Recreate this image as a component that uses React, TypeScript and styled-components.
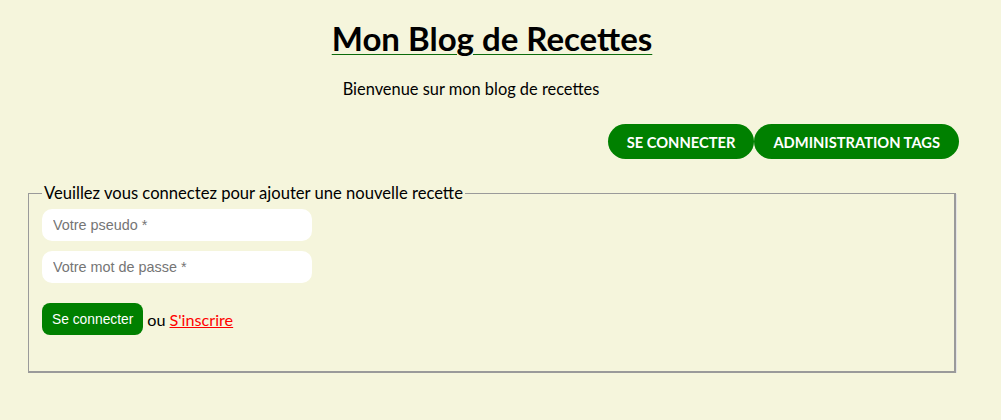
import React from "react";
import styled, { createGlobalStyle } from "styled-components";

const Global = createGlobalStyle`
  html, body { margin: 0; padding: 0; background: #f5f5dc; }
  body { font-family: "Lato", "DejaVu Sans", sans-serif; color: #000; }
`;

const Page = styled.div`
  margin: 0 45px 0 28px;
  padding-top: 19px;
  display: flex;
  flex-direction: column;
`;

const Title = styled.h1`
  margin: 0;
  text-align: center;
  font-size: 33px;
  font-weight: 700;
  line-height: 38px;
  text-decoration: underline;
  text-decoration-color: #0b6b0b;
  text-decoration-thickness: 1px;
  text-underline-offset: 3px;
`;

const Intro = styled.p`
  margin: 22px 42px 0 0;
  text-align: center;
  font-size: 16.4px;
  line-height: 20px;
`;

const Nav = styled.nav`
  display: flex;
  justify-content: flex-end;
  margin: 25px -3px 0 0;
`;

const NavButton = styled.button`
  height: 35px;
  padding: 0 19px;
  border: none;
  border-radius: 18px;
  background: #008000;
  color: #fff;
  font-family: inherit;
  font-weight: 700;
  font-size: 14.7px;
  text-transform: uppercase;
  cursor: pointer;
`;

const Fieldset = styled.fieldset`
  margin: 25px 0 0 0;
  padding: 7px 12px 36px 13px;
  border: 1px solid #9a9a9a;
  border-right-width: 2px;
  border-bottom-width: 2px;
  box-shadow: 1px 1px 0 #e4e4e4;
  display: flex;
  flex-direction: column;
  align-items: flex-start;
`;

const Legend = styled.legend`
  padding: 0 2px;
  margin-left: 0;
  font-size: 16.6px;
  line-height: 18px;
`;

const Input = styled.input`
  width: 270px;
  height: 32px;
  box-sizing: border-box;
  margin: 0 0 10px;
  padding: 0 11px;
  border: none;
  border-radius: 10px;
  background: #fff;
  font-family: "Liberation Sans", sans-serif;
  font-size: 14.4px;
  &::placeholder { color: #757575; }
  &:focus { outline: none; }
`;

const Actions = styled.div`
  display: flex;
  align-items: center;
  gap: 4px;
  margin-top: 10px;
  font-size: 16.2px;
`;

const SubmitButton = styled.button`
  height: 32px;
  padding: 0 10px;
  border: none;
  border-radius: 8px;
  background: #008000;
  color: #fff;
  font-family: "Liberation Sans", sans-serif;
  font-size: 13.8px;
`;

const Link = styled.a`
  color: #f00;
  text-decoration: underline;
`;

export default function App() {
  return (
    <>
      <Global />
      <Page>
        <Title>Mon Blog de Recettes</Title>
        <Intro>Bienvenue sur mon blog de recettes</Intro>
        <Nav>
          <NavButton>Se connecter</NavButton>
          <NavButton>Administration tags</NavButton>
        </Nav>
        <Fieldset>
          <Legend>Veuillez vous connectez pour ajouter une nouvelle recette</Legend>
          <Input placeholder="Votre pseudo *" />
          <Input type="password" placeholder="Votre mot de passe *" />
          <Actions>
            <SubmitButton>Se connecter</SubmitButton>
            <span>ou</span>
            <Link href="#">S'inscrire</Link>
          </Actions>
        </Fieldset>
      </Page>
    </>
  );
}
